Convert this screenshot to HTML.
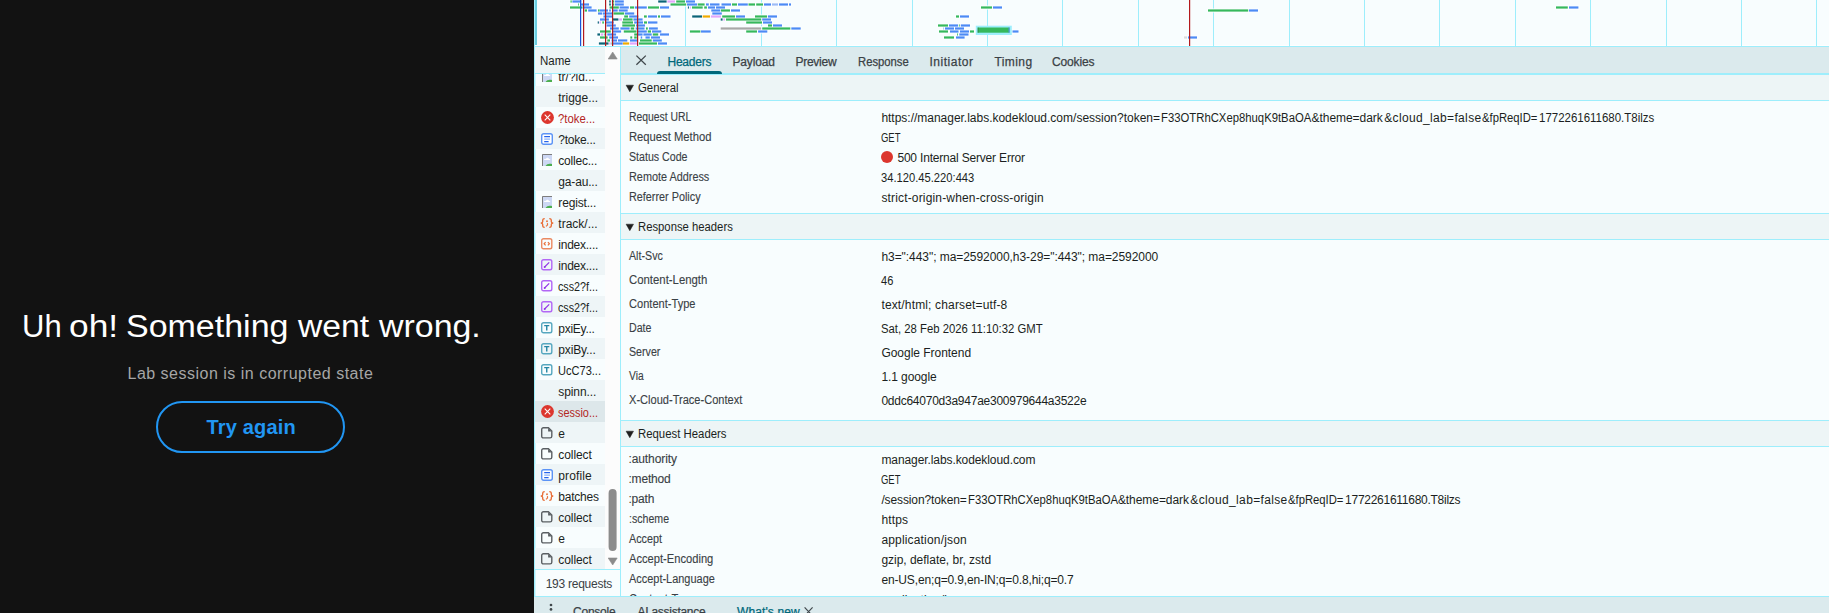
<!DOCTYPE html><html lang="en"><head><meta charset="utf-8"><title>Lab session error</title><style>
html,body{margin:0;padding:0;background:#121212;}
body{width:1829px;height:613px;position:relative;overflow:hidden;font-family:"Liberation Sans",sans-serif;}
.abs,.t,.ic{position:absolute;}
.t{white-space:pre;transform-origin:0 0;}
.tb{-webkit-text-stroke:0.25px currentColor;}
.lb{-webkit-text-stroke:0.12px currentColor;}
#page{left:0;top:0;width:534px;height:613px;background:#121212;}
h1,p{position:absolute;left:0;top:0;margin:0;font-weight:400;font-size:16px;}
#btn{position:absolute;left:156px;top:401px;width:189px;height:52px;box-sizing:border-box;border:2px solid #2196f3;border-radius:26px;background:transparent;padding:0;margin:0;font-family:inherit;}
#dt{left:534px;top:0;width:1295px;height:613px;background:#f8fdfe;overflow:hidden;}
.h{position:absolute;height:1px;background:#9eeefc;}
.v{position:absolute;width:1px;background:#9eeefc;}
.hdr{position:absolute;left:87px;width:1208px;height:25px;background:#edf5f6;}
.tri{position:absolute;left:91.9px;width:0;height:0;border-left:3.9px solid transparent;border-right:3.9px solid transparent;border-top:7px solid #1f1f1f;}
.row{position:absolute;left:1px;width:70px;height:21px;}
</style></head><body><div id="page" class="abs"><h1><span class="t hd" style="left:21.60px;top:307px;font-size:31px;line-height:39px;color:#ffffff;transform:translateY(-0.10px) scaleX(1.0004);">Uh</span> <span class="t hd" style="left:69.26px;top:307px;font-size:31px;line-height:39px;color:#ffffff;transform:translateY(-0.10px) scaleX(1.1398);">oh!</span> <span class="t hd" style="left:125.90px;top:307px;font-size:31px;line-height:39px;color:#ffffff;transform:translateY(-0.10px) scaleX(1.0962);">Something</span> <span class="t hd" style="left:298.09px;top:307px;font-size:31px;line-height:39px;color:#ffffff;transform:translateY(-0.10px) scaleX(1.0857);">went</span> <span class="t hd" style="left:379.09px;top:307px;font-size:31px;line-height:39px;color:#ffffff;transform:translateY(-0.10px) scaleX(1.0937);">wrong.</span></h1><p><span class="t" style="left:127.50px;top:364px;font-size:16px;line-height:20px;color:#a6a6a6;letter-spacing:0.495px;">Lab session is in corrupted state</span></p><button id="btn" type="button"><span class="t" style="left:48.50px;top:12px;font-size:20px;line-height:25px;color:#2196f3;letter-spacing:0.176px;font-weight:700;">Try again</span></button></div><div id="dt" class="abs"><div class="abs" style="left:0;top:0;width:1295px;height:46px;background:#f8fdfe"></div><svg class="abs" style="left:0;top:0" width="1295" height="47" viewBox="0 0 1295 47"><rect x="0" y="45" width="1295" height="1" fill="#ffffff"/><rect x="151" y="0" width="1" height="46" fill="#9eeefc"/><rect x="227" y="0" width="1" height="46" fill="#9eeefc"/><rect x="302" y="0" width="1" height="46" fill="#9eeefc"/><rect x="378" y="0" width="1" height="46" fill="#9eeefc"/><rect x="453" y="0" width="1" height="46" fill="#9eeefc"/><rect x="528" y="0" width="1" height="46" fill="#9eeefc"/><rect x="604" y="0" width="1" height="46" fill="#9eeefc"/><rect x="679" y="0" width="1" height="46" fill="#9eeefc"/><rect x="755" y="0" width="1" height="46" fill="#9eeefc"/><rect x="830" y="0" width="1" height="46" fill="#9eeefc"/><rect x="905" y="0" width="1" height="46" fill="#9eeefc"/><rect x="981" y="0" width="1" height="46" fill="#9eeefc"/><rect x="1056" y="0" width="1" height="46" fill="#9eeefc"/><rect x="1132" y="0" width="1" height="46" fill="#9eeefc"/><rect x="1207" y="0" width="1" height="46" fill="#9eeefc"/><rect x="1282" y="0" width="1" height="46" fill="#9eeefc"/><g fill="#fbfeff"><rect x="35.5" y="-0.5" width="3.2" height="4"/><rect x="37.4" y="-0.5" width="10.9" height="4"/><rect x="74.2" y="-0.5" width="3.6" height="4"/><rect x="76.8" y="-0.5" width="2.8" height="4"/><rect x="78.0" y="-0.5" width="3.2" height="4"/><rect x="80.0" y="-0.5" width="10.8" height="4"/><rect x="43.2" y="2.5" width="2.8" height="4"/><rect x="45.0" y="2.5" width="11.0" height="4"/><rect x="74.2" y="2.5" width="3.6" height="4"/><rect x="78.0" y="2.5" width="3.2" height="4"/><rect x="80.0" y="2.5" width="10.8" height="4"/><rect x="35.0" y="5.5" width="14.0" height="4"/><rect x="47.4" y="5.5" width="11.2" height="4"/><rect x="74.6" y="5.5" width="11.2" height="4"/><rect x="84.6" y="5.5" width="11.2" height="4"/><rect x="95.0" y="5.5" width="6.2" height="4"/><rect x="100.0" y="5.5" width="13.8" height="4"/><rect x="113.0" y="5.5" width="13.0" height="4"/><rect x="125.0" y="5.5" width="11.0" height="4"/><rect x="49.7" y="8.5" width="4.3" height="4"/><rect x="53.2" y="8.5" width="10.4" height="4"/><rect x="63.0" y="8.5" width="3.7" height="4"/><rect x="65.0" y="8.5" width="10.0" height="4"/><rect x="74.2" y="8.5" width="3.6" height="4"/><rect x="77.7" y="8.5" width="7.0" height="4"/><rect x="83.8" y="8.5" width="10.9" height="4"/><rect x="63.0" y="11.5" width="6.3" height="4"/><rect x="68.0" y="11.5" width="12.0" height="4"/><rect x="78.5" y="11.5" width="12.7" height="4"/><rect x="90.0" y="11.5" width="11.2" height="4"/><rect x="68.5" y="14.5" width="10.8" height="4"/><rect x="89.2" y="14.5" width="5.8" height="4"/><rect x="94.2" y="14.5" width="11.2" height="4"/><rect x="109.0" y="14.5" width="4.8" height="4"/><rect x="113.0" y="14.5" width="11.0" height="4"/><rect x="123.0" y="14.5" width="4.0" height="4"/><rect x="126.0" y="14.5" width="11.5" height="4"/><rect x="65.0" y="17.5" width="10.9" height="4"/><rect x="78.0" y="17.5" width="7.4" height="4"/><rect x="84.2" y="17.5" width="4.7" height="4"/><rect x="88.0" y="17.5" width="11.6" height="4"/><rect x="98.4" y="17.5" width="11.2" height="4"/><rect x="62.7" y="20.5" width="3.2" height="4"/><rect x="64.6" y="20.5" width="3.2" height="4"/><rect x="67.3" y="20.5" width="3.6" height="4"/><rect x="70.8" y="20.5" width="10.0" height="4"/><rect x="87.3" y="20.5" width="12.7" height="4"/><rect x="99.2" y="20.5" width="10.8" height="4"/><rect x="109.0" y="20.5" width="5.0" height="4"/><rect x="113.0" y="20.5" width="11.4" height="4"/><rect x="71.6" y="23.5" width="11.2" height="4"/><rect x="87.3" y="23.5" width="14.7" height="4"/><rect x="101.0" y="23.5" width="11.0" height="4"/><rect x="75.0" y="26.5" width="10.8" height="4"/><rect x="85.4" y="26.5" width="11.2" height="4"/><rect x="95.7" y="26.5" width="5.5" height="4"/><rect x="100.7" y="26.5" width="10.8" height="4"/><rect x="111.0" y="26.5" width="3.8" height="4"/><rect x="114.0" y="26.5" width="10.8" height="4"/><rect x="65.0" y="29.5" width="12.8" height="4"/><rect x="77.7" y="29.5" width="10.4" height="4"/><rect x="88.8" y="29.5" width="14.7" height="4"/><rect x="101.9" y="29.5" width="11.9" height="4"/><rect x="112.8" y="29.5" width="5.2" height="4"/><rect x="117.0" y="29.5" width="11.3" height="4"/><rect x="62.4" y="32.5" width="4.6" height="4"/><rect x="65.8" y="32.5" width="4.3" height="4"/><rect x="68.9" y="32.5" width="2.7" height="4"/><rect x="72.3" y="32.5" width="10.8" height="4"/><rect x="99.2" y="32.5" width="5.4" height="4"/><rect x="103.0" y="32.5" width="6.6" height="4"/><rect x="108.4" y="32.5" width="10.3" height="4"/><rect x="117.8" y="32.5" width="7.4" height="4"/><rect x="125.0" y="32.5" width="11.0" height="4"/><rect x="65.0" y="35.5" width="9.7" height="4"/><rect x="74.2" y="35.5" width="10.8" height="4"/><rect x="95.3" y="35.5" width="3.9" height="4"/><rect x="99.2" y="35.5" width="4.6" height="4"/><rect x="105.7" y="35.5" width="3.5" height="4"/><rect x="110.5" y="35.5" width="6.3" height="4"/><rect x="116.0" y="35.5" width="11.0" height="4"/><rect x="72.3" y="38.5" width="4.7" height="4"/><rect x="76.5" y="38.5" width="7.5" height="4"/><rect x="83.0" y="38.5" width="11.3" height="4"/><rect x="95.0" y="38.5" width="9.6" height="4"/><rect x="105.0" y="38.5" width="13.7" height="4"/><rect x="117.8" y="38.5" width="11.0" height="4"/><rect x="63.9" y="41.5" width="11.6" height="4"/><rect x="74.2" y="41.5" width="3.6" height="4"/><rect x="76.5" y="41.5" width="2.8" height="4"/><rect x="78.0" y="41.5" width="11.7" height="4"/><rect x="88.0" y="41.5" width="8.2" height="4"/><rect x="95.0" y="41.5" width="8.9" height="4"/><rect x="104.0" y="41.5" width="20.0" height="4"/><rect x="123.0" y="41.5" width="11.0" height="4"/><rect x="123.2" y="-0.5" width="10.4" height="4"/><rect x="132.4" y="-0.5" width="9.6" height="4"/><rect x="141.2" y="-0.5" width="10.8" height="4"/><rect x="151.0" y="-0.5" width="11.0" height="4"/><rect x="135.5" y="2.5" width="17.7" height="4"/><rect x="152.0" y="2.5" width="12.0" height="4"/><rect x="162.7" y="2.5" width="8.9" height="4"/><rect x="171.0" y="2.5" width="4.8" height="4"/><rect x="175.0" y="2.5" width="11.5" height="4"/><rect x="186.5" y="2.5" width="11.5" height="4"/><rect x="197.0" y="2.5" width="7.0" height="4"/><rect x="203.0" y="2.5" width="11.8" height="4"/><rect x="213.5" y="2.5" width="8.5" height="4"/><rect x="221.2" y="2.5" width="8.8" height="4"/><rect x="229.0" y="2.5" width="9.0" height="4"/><rect x="237.0" y="2.5" width="8.0" height="4"/><rect x="244.0" y="2.5" width="11.0" height="4"/><rect x="254.0" y="2.5" width="4.0" height="4"/><rect x="152.9" y="5.5" width="3.0" height="4"/><rect x="154.9" y="5.5" width="2.9" height="4"/><rect x="157.0" y="5.5" width="12.7" height="4"/><rect x="169.2" y="5.5" width="4.7" height="4"/><rect x="173.0" y="5.5" width="9.0" height="4"/><rect x="181.0" y="5.5" width="11.0" height="4"/><rect x="176.3" y="8.5" width="11.0" height="4"/><rect x="186.0" y="8.5" width="11.0" height="4"/><rect x="196.0" y="8.5" width="11.0" height="4"/><rect x="177.3" y="11.5" width="11.5" height="4"/><rect x="157.2" y="14.5" width="11.8" height="4"/><rect x="167.7" y="14.5" width="9.3" height="4"/><rect x="175.9" y="14.5" width="12.1" height="4"/><rect x="187.2" y="14.5" width="14.8" height="4"/><rect x="201.0" y="14.5" width="11.0" height="4"/><rect x="220.0" y="14.5" width="14.0" height="4"/><rect x="232.9" y="14.5" width="11.1" height="4"/><rect x="185.7" y="17.5" width="3.9" height="4"/><rect x="188.4" y="17.5" width="3.5" height="4"/><rect x="191.0" y="17.5" width="37.2" height="4"/><rect x="227.2" y="17.5" width="10.8" height="4"/><rect x="211.2" y="20.5" width="17.8" height="4"/><rect x="228.0" y="20.5" width="11.0" height="4"/><rect x="233.0" y="23.5" width="6.0" height="4"/><rect x="238.0" y="23.5" width="11.0" height="4"/><rect x="185.7" y="26.5" width="42.5" height="4"/><rect x="227.2" y="26.5" width="30.1" height="4"/><rect x="256.3" y="26.5" width="11.4" height="4"/><rect x="154.9" y="29.5" width="12.5" height="4"/><rect x="166.0" y="29.5" width="11.7" height="4"/><rect x="211.2" y="29.5" width="12.8" height="4"/><rect x="223.1" y="29.5" width="11.2" height="4"/><rect x="446.0" y="5.5" width="13.0" height="4"/><rect x="458.0" y="5.5" width="11.0" height="4"/><rect x="421.0" y="14.5" width="5.0" height="4"/><rect x="425.0" y="14.5" width="11.0" height="4"/><rect x="403.0" y="23.5" width="12.0" height="4"/><rect x="414.0" y="23.5" width="11.0" height="4"/><rect x="423.9" y="23.5" width="2.8" height="4"/><rect x="425.8" y="23.5" width="11.2" height="4"/><rect x="408.2" y="26.5" width="2.8" height="4"/><rect x="410.0" y="26.5" width="11.0" height="4"/><rect x="420.0" y="26.5" width="11.0" height="4"/><rect x="404.0" y="29.5" width="11.0" height="4"/><rect x="415.0" y="29.5" width="10.5" height="4"/><rect x="425.0" y="29.5" width="11.0" height="4"/><rect x="435.0" y="29.5" width="6.0" height="4"/><rect x="477.5" y="29.5" width="8.0" height="4"/><rect x="422.0" y="32.5" width="2.8" height="4"/><rect x="424.3" y="32.5" width="11.2" height="4"/><rect x="409.0" y="35.5" width="12.0" height="4"/><rect x="421.0" y="35.5" width="10.6" height="4"/><rect x="673.0" y="8.5" width="42.2" height="4"/><rect x="714.0" y="8.5" width="11.0" height="4"/><rect x="649.0" y="35.5" width="5.0" height="4"/><rect x="653.0" y="35.5" width="11.0" height="4"/><rect x="1021.0" y="5.5" width="13.8" height="4"/><rect x="1034.0" y="5.5" width="11.4" height="4"/></g><rect x="36.5" y="0.4" width="1.2" height="2.2" fill="#36b85c"/><rect x="38.4" y="0.4" width="8.9" height="2.2" fill="#4c8af5"/><rect x="75.2" y="0.4" width="1.6" height="2.2" fill="#0b6478"/><rect x="77.8" y="0.4" width="0.8" height="2.2" fill="#e2a6fa"/><rect x="79.0" y="0.4" width="1.2" height="2.2" fill="#36b85c"/><rect x="81.0" y="0.4" width="8.8" height="2.2" fill="#4c8af5"/><rect x="44.2" y="3.4" width="0.8" height="2.2" fill="#36b85c"/><rect x="46.0" y="3.4" width="9.0" height="2.2" fill="#4c8af5"/><rect x="75.2" y="3.4" width="1.6" height="2.2" fill="#0b6478"/><rect x="79.0" y="3.4" width="1.2" height="2.2" fill="#36b85c"/><rect x="81.0" y="3.4" width="8.8" height="2.2" fill="#4c8af5"/><rect x="36.0" y="6.4" width="12.0" height="2.2" fill="#36b85c"/><rect x="48.4" y="6.4" width="9.2" height="2.2" fill="#4c8af5"/><rect x="75.6" y="6.4" width="9.2" height="2.2" fill="#36b85c"/><rect x="85.6" y="6.4" width="9.2" height="2.2" fill="#4c8af5"/><rect x="96.0" y="6.4" width="4.2" height="2.2" fill="#36b85c"/><rect x="101.0" y="6.4" width="11.8" height="2.2" fill="#4c8af5"/><rect x="114.0" y="6.4" width="11.0" height="2.2" fill="#36b85c"/><rect x="126.0" y="6.4" width="9.0" height="2.2" fill="#4c8af5"/><rect x="50.7" y="9.4" width="2.3" height="2.2" fill="#36b85c"/><rect x="54.2" y="9.4" width="8.4" height="2.2" fill="#4c8af5"/><rect x="64.0" y="9.4" width="1.7" height="2.2" fill="#36b85c"/><rect x="66.0" y="9.4" width="8.0" height="2.2" fill="#4c8af5"/><rect x="75.2" y="9.4" width="1.6" height="2.2" fill="#4c8af5"/><rect x="78.7" y="9.4" width="5.0" height="2.2" fill="#4c8af5"/><rect x="84.8" y="9.4" width="8.9" height="2.2" fill="#4c8af5"/><rect x="64.0" y="12.4" width="4.3" height="2.2" fill="#4c8af5"/><rect x="69.0" y="12.4" width="10.0" height="2.2" fill="#4c8af5"/><rect x="79.5" y="12.4" width="10.7" height="2.2" fill="#36b85c"/><rect x="91.0" y="12.4" width="9.2" height="2.2" fill="#4c8af5"/><rect x="69.5" y="15.4" width="8.8" height="2.2" fill="#4c8af5"/><rect x="90.2" y="15.4" width="3.8" height="2.2" fill="#36b85c"/><rect x="95.2" y="15.4" width="9.2" height="2.2" fill="#4c8af5"/><rect x="110.0" y="15.4" width="2.8" height="2.2" fill="#36b85c"/><rect x="114.0" y="15.4" width="9.0" height="2.2" fill="#4c8af5"/><rect x="124.0" y="15.4" width="2.0" height="2.2" fill="#36b85c"/><rect x="127.0" y="15.4" width="9.5" height="2.2" fill="#4c8af5"/><rect x="66.0" y="18.4" width="8.9" height="2.2" fill="#4c8af5"/><rect x="79.0" y="18.4" width="5.4" height="2.2" fill="#0b6478"/><rect x="85.2" y="18.4" width="2.7" height="2.2" fill="#e2a6fa"/><rect x="89.0" y="18.4" width="9.6" height="2.2" fill="#36b85c"/><rect x="99.4" y="18.4" width="9.2" height="2.2" fill="#4c8af5"/><rect x="63.7" y="21.4" width="1.2" height="2.2" fill="#0b6478"/><rect x="65.6" y="21.4" width="1.2" height="2.2" fill="#e2a6fa"/><rect x="68.3" y="21.4" width="1.6" height="2.2" fill="#36b85c"/><rect x="71.8" y="21.4" width="8.0" height="2.2" fill="#4c8af5"/><rect x="88.3" y="21.4" width="10.7" height="2.2" fill="#36b85c"/><rect x="100.2" y="21.4" width="8.8" height="2.2" fill="#4c8af5"/><rect x="110.0" y="21.4" width="3.0" height="2.2" fill="#36b85c"/><rect x="114.0" y="21.4" width="9.4" height="2.2" fill="#4c8af5"/><rect x="72.6" y="24.4" width="9.2" height="2.2" fill="#4c8af5"/><rect x="88.3" y="24.4" width="12.7" height="2.2" fill="#36b85c"/><rect x="102.0" y="24.4" width="9.0" height="2.2" fill="#4c8af5"/><rect x="76.0" y="27.4" width="8.8" height="2.2" fill="#4c8af5"/><rect x="86.4" y="27.4" width="9.2" height="2.2" fill="#4c8af5"/><rect x="96.7" y="27.4" width="3.5" height="2.2" fill="#36b85c"/><rect x="101.7" y="27.4" width="8.8" height="2.2" fill="#4c8af5"/><rect x="112.0" y="27.4" width="1.8" height="2.2" fill="#36b85c"/><rect x="115.0" y="27.4" width="8.8" height="2.2" fill="#4c8af5"/><rect x="66.0" y="30.4" width="10.8" height="2.2" fill="#36b85c"/><rect x="78.7" y="30.4" width="8.4" height="2.2" fill="#4c8af5"/><rect x="89.8" y="30.4" width="12.7" height="2.2" fill="#36b85c"/><rect x="102.9" y="30.4" width="9.9" height="2.2" fill="#4c8af5"/><rect x="113.8" y="30.4" width="3.2" height="2.2" fill="#36b85c"/><rect x="118.0" y="30.4" width="9.3" height="2.2" fill="#4c8af5"/><rect x="63.4" y="33.4" width="2.6" height="2.2" fill="#0b6478"/><rect x="66.8" y="33.4" width="2.3" height="2.2" fill="#e2a6fa"/><rect x="69.9" y="33.4" width="0.7" height="2.2" fill="#36b85c"/><rect x="73.3" y="33.4" width="8.8" height="2.2" fill="#4c8af5"/><rect x="100.2" y="33.4" width="3.4" height="2.2" fill="#36b85c"/><rect x="104.0" y="33.4" width="4.6" height="2.2" fill="#4c8af5"/><rect x="109.4" y="33.4" width="8.3" height="2.2" fill="#4c8af5"/><rect x="118.8" y="33.4" width="5.4" height="2.2" fill="#36b85c"/><rect x="126.0" y="33.4" width="9.0" height="2.2" fill="#4c8af5"/><rect x="66.0" y="36.4" width="7.7" height="2.2" fill="#36b85c"/><rect x="75.2" y="36.4" width="8.8" height="2.2" fill="#4c8af5"/><rect x="96.3" y="36.4" width="1.9" height="2.2" fill="#36b85c"/><rect x="100.2" y="36.4" width="2.6" height="2.2" fill="#36b85c"/><rect x="106.7" y="36.4" width="1.5" height="2.2" fill="#4c8af5"/><rect x="111.5" y="36.4" width="4.3" height="2.2" fill="#4c8af5"/><rect x="117.0" y="36.4" width="9.0" height="2.2" fill="#4c8af5"/><rect x="73.3" y="39.4" width="2.7" height="2.2" fill="#36b85c"/><rect x="77.5" y="39.4" width="5.5" height="2.2" fill="#4c8af5"/><rect x="84.0" y="39.4" width="9.3" height="2.2" fill="#4c8af5"/><rect x="96.0" y="39.4" width="7.6" height="2.2" fill="#4c8af5"/><rect x="106.0" y="39.4" width="11.7" height="2.2" fill="#36b85c"/><rect x="118.8" y="39.4" width="9.0" height="2.2" fill="#4c8af5"/><rect x="64.9" y="42.4" width="9.6" height="2.2" fill="#0b6478"/><rect x="75.2" y="42.4" width="1.6" height="2.2" fill="#e2a6fa"/><rect x="77.5" y="42.4" width="0.8" height="2.2" fill="#36b85c"/><rect x="79.0" y="42.4" width="9.7" height="2.2" fill="#4c8af5"/><rect x="89.0" y="42.4" width="6.2" height="2.2" fill="#f0ab00"/><rect x="96.0" y="42.4" width="6.9" height="2.2" fill="#e2a6fa"/><rect x="105.0" y="42.4" width="18.0" height="2.2" fill="#36b85c"/><rect x="124.0" y="42.4" width="9.0" height="2.2" fill="#4c8af5"/><rect x="124.2" y="0.4" width="8.4" height="2.2" fill="#0b6478"/><rect x="133.4" y="0.4" width="7.6" height="2.2" fill="#e2a6fa"/><rect x="142.2" y="0.4" width="8.8" height="2.2" fill="#36b85c"/><rect x="152.0" y="0.4" width="9.0" height="2.2" fill="#4c8af5"/><rect x="136.5" y="3.4" width="15.7" height="2.2" fill="#36b85c"/><rect x="153.0" y="3.4" width="10.0" height="2.2" fill="#4c8af5"/><rect x="163.7" y="3.4" width="6.9" height="2.2" fill="#36b85c"/><rect x="172.0" y="3.4" width="2.8" height="2.2" fill="#4c8af5"/><rect x="176.0" y="3.4" width="9.5" height="2.2" fill="#4c8af5"/><rect x="187.5" y="3.4" width="9.5" height="2.2" fill="#4c8af5"/><rect x="198.0" y="3.4" width="5.0" height="2.2" fill="#36b85c"/><rect x="204.0" y="3.4" width="9.8" height="2.2" fill="#4c8af5"/><rect x="214.5" y="3.4" width="6.5" height="2.2" fill="#36b85c"/><rect x="222.2" y="3.4" width="6.8" height="2.2" fill="#36b85c"/><rect x="230.0" y="3.4" width="7.0" height="2.2" fill="#4c8af5"/><rect x="238.0" y="3.4" width="6.0" height="2.2" fill="#9dbcf7"/><rect x="245.0" y="3.4" width="9.0" height="2.2" fill="#4c8af5"/><rect x="255.0" y="3.4" width="2.0" height="2.2" fill="#4c8af5"/><rect x="153.9" y="6.4" width="1.0" height="2.2" fill="#0b6478"/><rect x="155.9" y="6.4" width="0.9" height="2.2" fill="#e2a6fa"/><rect x="158.0" y="6.4" width="10.7" height="2.2" fill="#36b85c"/><rect x="170.2" y="6.4" width="2.7" height="2.2" fill="#36b85c"/><rect x="174.0" y="6.4" width="7.0" height="2.2" fill="#4c8af5"/><rect x="182.0" y="6.4" width="9.0" height="2.2" fill="#4c8af5"/><rect x="177.3" y="9.4" width="9.0" height="2.2" fill="#4c8af5"/><rect x="187.0" y="9.4" width="9.0" height="2.2" fill="#36b85c"/><rect x="197.0" y="9.4" width="9.0" height="2.2" fill="#4c8af5"/><rect x="178.3" y="12.4" width="9.5" height="2.2" fill="#4c8af5"/><rect x="158.2" y="15.4" width="9.8" height="2.2" fill="#0b6478"/><rect x="168.7" y="15.4" width="7.3" height="2.2" fill="#f0ab00"/><rect x="176.9" y="15.4" width="10.1" height="2.2" fill="#e2a6fa"/><rect x="188.2" y="15.4" width="12.8" height="2.2" fill="#36b85c"/><rect x="202.0" y="15.4" width="9.0" height="2.2" fill="#4c8af5"/><rect x="221.0" y="15.4" width="12.0" height="2.2" fill="#36b85c"/><rect x="233.9" y="15.4" width="9.1" height="2.2" fill="#4c8af5"/><rect x="186.7" y="18.4" width="1.9" height="2.2" fill="#0b6478"/><rect x="189.4" y="18.4" width="1.5" height="2.2" fill="#e2a6fa"/><rect x="192.0" y="18.4" width="35.2" height="2.2" fill="#36b85c"/><rect x="228.2" y="18.4" width="8.8" height="2.2" fill="#4c8af5"/><rect x="212.2" y="21.4" width="15.8" height="2.2" fill="#36b85c"/><rect x="229.0" y="21.4" width="9.0" height="2.2" fill="#4c8af5"/><rect x="234.0" y="24.4" width="4.0" height="2.2" fill="#36b85c"/><rect x="239.0" y="24.4" width="9.0" height="2.2" fill="#4c8af5"/><rect x="186.7" y="27.4" width="40.5" height="2.2" fill="#a8a8a8"/><rect x="228.2" y="27.4" width="28.1" height="2.2" fill="#36b85c"/><rect x="257.3" y="27.4" width="9.4" height="2.2" fill="#4c8af5"/><rect x="155.9" y="30.4" width="10.5" height="2.2" fill="#36b85c"/><rect x="167.0" y="30.4" width="9.7" height="2.2" fill="#4c8af5"/><rect x="212.2" y="30.4" width="10.8" height="2.2" fill="#36b85c"/><rect x="224.1" y="30.4" width="9.2" height="2.2" fill="#4c8af5"/><rect x="447.0" y="6.4" width="11.0" height="2.2" fill="#36b85c"/><rect x="459.0" y="6.4" width="9.0" height="2.2" fill="#4c8af5"/><rect x="422.0" y="15.4" width="3.0" height="2.2" fill="#36b85c"/><rect x="426.0" y="15.4" width="9.0" height="2.2" fill="#4c8af5"/><rect x="404.0" y="24.4" width="10.0" height="2.2" fill="#36b85c"/><rect x="415.0" y="24.4" width="9.0" height="2.2" fill="#4c8af5"/><rect x="424.9" y="24.4" width="0.8" height="2.2" fill="#36b85c"/><rect x="426.8" y="24.4" width="9.2" height="2.2" fill="#4c8af5"/><rect x="409.2" y="27.4" width="0.8" height="2.2" fill="#9dbcf7"/><rect x="411.0" y="27.4" width="9.0" height="2.2" fill="#4c8af5"/><rect x="421.0" y="27.4" width="9.0" height="2.2" fill="#4c8af5"/><rect x="405.0" y="30.4" width="9.0" height="2.2" fill="#36b85c"/><rect x="416.0" y="30.4" width="8.5" height="2.2" fill="#4c8af5"/><rect x="426.0" y="30.4" width="9.0" height="2.2" fill="#4c8af5"/><rect x="436.0" y="30.4" width="4.0" height="2.2" fill="#36b85c"/><rect x="478.5" y="30.4" width="6.0" height="2.2" fill="#4c8af5"/><rect x="423.0" y="33.4" width="0.8" height="2.2" fill="#36b85c"/><rect x="425.3" y="33.4" width="9.2" height="2.2" fill="#4c8af5"/><rect x="410.0" y="36.4" width="10.0" height="2.2" fill="#36b85c"/><rect x="422.0" y="36.4" width="8.6" height="2.2" fill="#4c8af5"/><rect x="674.0" y="9.4" width="40.2" height="2.2" fill="#36b85c"/><rect x="715.0" y="9.4" width="9.0" height="2.2" fill="#4c8af5"/><rect x="650.0" y="36.4" width="3.0" height="2.2" fill="#d9dddd"/><rect x="654.0" y="36.4" width="9.0" height="2.2" fill="#4c8af5"/><rect x="1022.0" y="6.4" width="11.8" height="2.2" fill="#36b85c"/><rect x="1035.0" y="6.4" width="9.4" height="2.2" fill="#4c8af5"/><rect x="441.8" y="25.7" width="36" height="9.3" fill="#9eeefc"/><rect x="443.7" y="27.5" width="31.8" height="5.2" fill="#36b85c"/><rect x="474.6" y="27.5" width="1" height="5.2" fill="#4c8af5"/><rect x="443.7" y="27.5" width="0.8" height="5.2" fill="#2f7d4a"/><rect x="49" y="0" width="1.2" height="46" fill="#b3191c"/><rect x="71" y="0" width="1.2" height="46" fill="#b3191c"/><rect x="78" y="0" width="1.2" height="46" fill="#b3191c"/><rect x="103" y="0" width="1.2" height="46" fill="#b3191c"/><rect x="655" y="0" width="1.2" height="46" fill="#b3191c"/><rect x="46" y="0" width="1.2" height="46" fill="#1a53d6"/><rect x="0" y="46" width="1295" height="1" fill="#9eeefc"/><rect x="0" y="0" width="1" height="46" fill="#9eeefc"/><rect x="1" y="0" width="2" height="45" fill="#6ccde0"/></svg><div class="v" style="left:0;top:46px;height:551px"></div><div class="v" style="left:1px;top:47px;height:549px;background:#d4f6fd"></div><div class="abs" style="left:1px;top:47px;width:70px;height:26px;background:#edf5f6"></div><div id="list" class="abs" style="left:0;top:74px;width:71px;height:495px;overflow:hidden"><svg class="ic" style="left:8px;top:-4.2px" width="10" height="12" viewBox="0 0 10 12"><rect x="0" y="0" width="10" height="12" fill="#cdd8f4"/><path d="M0.5 12V0.5H10" fill="none" stroke="#7d7d7d" stroke-width="1"/><path d="M2 6.1c-.1-1.1 1.100-1.600 1.900-1.200.5-1.500 2.700-1.500 3.100 0 1-.1 1.500.6 1.200 1.200z" fill="#fff"/><path d="M3.600 12c1.200-2.300 4-2.900 6.400-1.900V12z" fill="#4caf50"/></svg><div class="row" style="top:12px;background:#eef5f7"></div><svg class="ic" style="left:6.5px;top:37.2px" width="13" height="13" viewBox="0 0 13 13"><circle cx="6.5" cy="6.5" r="6.4" fill="#dc362e"/><path d="M3.700 3.700l5.600 5.600M9.300 3.700l-5.600 5.600" stroke="#fff" stroke-width="1.050"/></svg><div class="row" style="top:54px;background:#eef5f7"></div><svg class="ic" style="left:6.8px;top:58.8px" width="12" height="12" viewBox="0 0 12 12"><rect x="0.7" y="0.7" width="10.6" height="10.6" rx="2" fill="#fff" stroke="#5b93f6" stroke-width="1.4"/><path d="M3.2 3.6h5.8M3.2 8.6h4.4" stroke="#2563eb" stroke-width="1.1"/><path d="M3.2 6.1h5.8" stroke="#7ba7f7" stroke-width="1.1"/></svg><svg class="ic" style="left:8px;top:79.8px" width="10" height="12" viewBox="0 0 10 12"><rect x="0" y="0" width="10" height="12" fill="#cdd8f4"/><path d="M0.5 12V0.5H10" fill="none" stroke="#7d7d7d" stroke-width="1"/><path d="M2 6.1c-.1-1.1 1.100-1.600 1.900-1.200.5-1.500 2.700-1.500 3.100 0 1-.1 1.500.6 1.200 1.200z" fill="#fff"/><path d="M3.600 12c1.200-2.300 4-2.900 6.400-1.900V12z" fill="#4caf50"/></svg><div class="row" style="top:96px;background:#eef5f7"></div><svg class="ic" style="left:8px;top:121.8px" width="10" height="12" viewBox="0 0 10 12"><rect x="0" y="0" width="10" height="12" fill="#cdd8f4"/><path d="M0.5 12V0.5H10" fill="none" stroke="#7d7d7d" stroke-width="1"/><path d="M2 6.1c-.1-1.1 1.100-1.600 1.900-1.200.5-1.500 2.700-1.500 3.100 0 1-.1 1.500.6 1.200 1.200z" fill="#fff"/><path d="M3.600 12c1.200-2.300 4-2.900 6.400-1.900V12z" fill="#4caf50"/></svg><div class="row" style="top:138px;background:#eef5f7"></div><svg class="ic" style="left:6px;top:143.6px" width="14" height="10" viewBox="0 0 14 10"><path d="M4.700 0.650C3.100 0.650 2.700 1.300 2.700 2.300v1.100c0 1-.6 1.500-1.900 1.600 1.300.1 1.900.6 1.900 1.600v1.100c0 1 .4 1.650 2 1.650M9.300 0.650c1.600 0 2 .65 2 1.650v1.100c0 1 .6 1.500 1.900 1.600-1.300.1-1.900.6-1.900 1.600v1.100c0 1-.4 1.650-2 1.650" fill="none" stroke="#e8703a" stroke-width="1.4"/><circle cx="7" cy="3.300" r="0.950" fill="#e8703a"/><path d="M7.500 5.700c.3 1-.1 1.800-1.100 2.300" stroke="#e8703a" stroke-width="1.300" fill="none" stroke-linecap="round"/></svg><svg class="ic" style="left:7.1px;top:164.2px" width="11.5" height="11.5" viewBox="0 0 11.5 11.5"><rect x="0.7" y="0.7" width="10.1" height="10.1" rx="1.8" fill="none" stroke="#ea8a62" stroke-width="1.4"/><path d="M4.6 4.1L3.1 5.75 4.6 7.4M6.9 4.1L8.4 5.75 6.9 7.4" fill="none" stroke="#e8703a" stroke-width="1.2"/></svg><div class="row" style="top:180px;background:#eef5f7"></div><svg class="ic" style="left:7.1px;top:185.2px" width="11.5" height="11.5" viewBox="0 0 11.5 11.5"><rect x="0.7" y="0.7" width="10.1" height="10.1" rx="1.8" fill="none" stroke="#b267f5" stroke-width="1.4"/><path d="M3.6 8L8.2 3.4" stroke="#9334e6" stroke-width="1.2"/><circle cx="3.7" cy="7.9" r="1" fill="#9334e6"/></svg><svg class="ic" style="left:7.1px;top:206.2px" width="11.5" height="11.5" viewBox="0 0 11.5 11.5"><rect x="0.7" y="0.7" width="10.1" height="10.1" rx="1.8" fill="none" stroke="#b267f5" stroke-width="1.4"/><path d="M3.6 8L8.2 3.4" stroke="#9334e6" stroke-width="1.2"/><circle cx="3.7" cy="7.9" r="1" fill="#9334e6"/></svg><div class="row" style="top:222px;background:#eef5f7"></div><svg class="ic" style="left:7.1px;top:227.2px" width="11.5" height="11.5" viewBox="0 0 11.5 11.5"><rect x="0.7" y="0.7" width="10.1" height="10.1" rx="1.8" fill="none" stroke="#b267f5" stroke-width="1.4"/><path d="M3.6 8L8.2 3.4" stroke="#9334e6" stroke-width="1.2"/><circle cx="3.7" cy="7.9" r="1" fill="#9334e6"/></svg><svg class="ic" style="left:7.1px;top:248.2px" width="11.5" height="11.5" viewBox="0 0 11.5 11.5"><rect x="0.7" y="0.7" width="10.1" height="10.1" rx="1.8" fill="none" stroke="#56a7bf" stroke-width="1.4"/><path d="M3.2 3.6h5.1M5.75 3.6v4.8" stroke="#2586a4" stroke-width="1.4" fill="none"/></svg><div class="row" style="top:264px;background:#eef5f7"></div><svg class="ic" style="left:7.1px;top:269.2px" width="11.5" height="11.5" viewBox="0 0 11.5 11.5"><rect x="0.7" y="0.7" width="10.1" height="10.1" rx="1.8" fill="none" stroke="#56a7bf" stroke-width="1.4"/><path d="M3.2 3.6h5.1M5.75 3.6v4.8" stroke="#2586a4" stroke-width="1.4" fill="none"/></svg><svg class="ic" style="left:7.1px;top:290.2px" width="11.5" height="11.5" viewBox="0 0 11.5 11.5"><rect x="0.7" y="0.7" width="10.1" height="10.1" rx="1.8" fill="none" stroke="#56a7bf" stroke-width="1.4"/><path d="M3.2 3.6h5.1M5.75 3.6v4.8" stroke="#2586a4" stroke-width="1.4" fill="none"/></svg><div class="row" style="top:306px;background:#eef5f7"></div><div class="row" style="top:327px;background:#dde7ea"></div><svg class="ic" style="left:6.5px;top:331.2px" width="13" height="13" viewBox="0 0 13 13"><circle cx="6.5" cy="6.5" r="6.4" fill="#dc362e"/><path d="M3.700 3.700l5.600 5.600M9.300 3.700l-5.600 5.600" stroke="#fff" stroke-width="1.050"/></svg><div class="row" style="top:348px;background:#eef5f7"></div><svg class="ic" style="left:7.3px;top:353.4px" width="11.5" height="11.5" viewBox="0 0 11.5 11.5"><path d="M2.4 0.7H7.4L10.8 4.1V9.2a1.7 1.7 0 0 1-1.7 1.7H2.4A1.7 1.7 0 0 1 .7 9.2V2.4A1.7 1.7 0 0 1 2.4.7z" fill="none" stroke="#5a5f63" stroke-width="1.4"/><path d="M7.1 0.9V4.4H10.6z" fill="#5a5f63"/></svg><svg class="ic" style="left:7.3px;top:374.4px" width="11.5" height="11.5" viewBox="0 0 11.5 11.5"><path d="M2.4 0.7H7.4L10.8 4.1V9.2a1.7 1.7 0 0 1-1.7 1.7H2.4A1.7 1.7 0 0 1 .7 9.2V2.4A1.7 1.7 0 0 1 2.4.7z" fill="none" stroke="#5a5f63" stroke-width="1.4"/><path d="M7.1 0.9V4.4H10.6z" fill="#5a5f63"/></svg><div class="row" style="top:390px;background:#eef5f7"></div><svg class="ic" style="left:6.8px;top:394.8px" width="12" height="12" viewBox="0 0 12 12"><rect x="0.7" y="0.7" width="10.6" height="10.6" rx="2" fill="#fff" stroke="#5b93f6" stroke-width="1.4"/><path d="M3.2 3.6h5.8M3.2 8.6h4.4" stroke="#2563eb" stroke-width="1.1"/><path d="M3.2 6.1h5.8" stroke="#7ba7f7" stroke-width="1.1"/></svg><svg class="ic" style="left:6px;top:416.6px" width="14" height="10" viewBox="0 0 14 10"><path d="M4.700 0.650C3.100 0.650 2.700 1.300 2.700 2.300v1.100c0 1-.6 1.500-1.900 1.600 1.300.1 1.900.6 1.900 1.600v1.100c0 1 .4 1.650 2 1.650M9.300 0.650c1.600 0 2 .65 2 1.650v1.100c0 1 .6 1.500 1.900 1.600-1.300.1-1.900.6-1.900 1.600v1.100c0 1-.4 1.650-2 1.650" fill="none" stroke="#e8703a" stroke-width="1.4"/><circle cx="7" cy="3.300" r="0.950" fill="#e8703a"/><path d="M7.500 5.700c.3 1-.1 1.800-1.100 2.300" stroke="#e8703a" stroke-width="1.300" fill="none" stroke-linecap="round"/></svg><div class="row" style="top:432px;background:#eef5f7"></div><svg class="ic" style="left:7.3px;top:437.4px" width="11.5" height="11.5" viewBox="0 0 11.5 11.5"><path d="M2.4 0.7H7.4L10.8 4.1V9.2a1.7 1.7 0 0 1-1.7 1.7H2.4A1.7 1.7 0 0 1 .7 9.2V2.4A1.7 1.7 0 0 1 2.4.7z" fill="none" stroke="#5a5f63" stroke-width="1.4"/><path d="M7.1 0.9V4.4H10.6z" fill="#5a5f63"/></svg><svg class="ic" style="left:7.3px;top:458.4px" width="11.5" height="11.5" viewBox="0 0 11.5 11.5"><path d="M2.4 0.7H7.4L10.8 4.1V9.2a1.7 1.7 0 0 1-1.7 1.7H2.4A1.7 1.7 0 0 1 .7 9.2V2.4A1.7 1.7 0 0 1 2.4.7z" fill="none" stroke="#5a5f63" stroke-width="1.4"/><path d="M7.1 0.9V4.4H10.6z" fill="#5a5f63"/></svg><div class="row" style="top:474px;background:#eef5f7"></div><svg class="ic" style="left:7.3px;top:479.4px" width="11.5" height="11.5" viewBox="0 0 11.5 11.5"><path d="M2.4 0.7H7.4L10.8 4.1V9.2a1.7 1.7 0 0 1-1.7 1.7H2.4A1.7 1.7 0 0 1 .7 9.2V2.4A1.7 1.7 0 0 1 2.4.7z" fill="none" stroke="#5a5f63" stroke-width="1.4"/><path d="M7.1 0.9V4.4H10.6z" fill="#5a5f63"/></svg><span class="t rowtxt" style="left:24.30px;top:-4px;font-size:12px;line-height:15px;color:#1b1f21;letter-spacing:-0.018px;">tr/?id...</span><span class="t rowtxt" style="left:24.30px;top:17px;font-size:12px;line-height:15px;color:#1b1f21;letter-spacing:-0.023px;">trigge...</span><span class="t rowtxt" style="left:24.30px;top:38px;font-size:12px;line-height:15px;color:#b3261e;transform:translateY(0.00px) scaleX(0.9456);">?toke...</span><span class="t rowtxt" style="left:24.30px;top:59px;font-size:12px;line-height:15px;color:#1b1f21;letter-spacing:-0.260px;">?toke...</span><span class="t rowtxt" style="left:24.30px;top:80px;font-size:12px;line-height:15px;color:#1b1f21;letter-spacing:-0.206px;">collec...</span><span class="t rowtxt" style="left:24.30px;top:101px;font-size:12px;line-height:15px;color:#1b1f21;letter-spacing:-0.166px;">ga-au...</span><span class="t rowtxt" style="left:24.30px;top:122px;font-size:12px;line-height:15px;color:#1b1f21;letter-spacing:-0.164px;">regist...</span><span class="t rowtxt" style="left:24.30px;top:143px;font-size:12px;line-height:15px;color:#1b1f21;">track/...</span><span class="t rowtxt" style="left:24.30px;top:164px;font-size:12px;line-height:15px;color:#1b1f21;letter-spacing:-0.249px;">index....</span><span class="t rowtxt" style="left:24.30px;top:185px;font-size:12px;line-height:15px;color:#1b1f21;letter-spacing:-0.249px;">index....</span><span class="t rowtxt" style="left:24.30px;top:206px;font-size:12px;line-height:15px;color:#1b1f21;transform:translateY(0.00px) scaleX(0.8952);">css2?f...</span><span class="t rowtxt" style="left:24.30px;top:227px;font-size:12px;line-height:15px;color:#1b1f21;transform:translateY(0.00px) scaleX(0.8952);">css2?f...</span><span class="t rowtxt" style="left:24.30px;top:248px;font-size:12px;line-height:15px;color:#1b1f21;letter-spacing:-0.274px;">pxiEy...</span><span class="t rowtxt" style="left:24.30px;top:269px;font-size:12px;line-height:15px;color:#1b1f21;letter-spacing:-0.132px;">pxiBy...</span><span class="t rowtxt" style="left:24.30px;top:290px;font-size:12px;line-height:15px;color:#1b1f21;transform:translateY(0.00px) scaleX(0.9213);">UcC73...</span><span class="t rowtxt" style="left:24.30px;top:311px;font-size:12px;line-height:15px;color:#1b1f21;letter-spacing:-0.094px;">spinn...</span><span class="t rowtxt" style="left:24.30px;top:332px;font-size:12px;line-height:15px;color:#b3261e;transform:translateY(0.00px) scaleX(0.9088);">sessio...</span><span class="t rowtxt" style="left:24.30px;top:353px;font-size:12px;line-height:15px;color:#1b1f21;">e</span><span class="t rowtxt" style="left:24.30px;top:374px;font-size:12px;line-height:15px;color:#1b1f21;letter-spacing:-0.080px;">collect</span><span class="t rowtxt" style="left:24.30px;top:395px;font-size:12px;line-height:15px;color:#1b1f21;letter-spacing:0.115px;">profile</span><span class="t rowtxt" style="left:24.30px;top:416px;font-size:12px;line-height:15px;color:#1b1f21;letter-spacing:-0.222px;">batches</span><span class="t rowtxt" style="left:24.30px;top:437px;font-size:12px;line-height:15px;color:#1b1f21;letter-spacing:-0.080px;">collect</span><span class="t rowtxt" style="left:24.30px;top:458px;font-size:12px;line-height:15px;color:#1b1f21;">e</span><span class="t rowtxt" style="left:24.30px;top:479px;font-size:12px;line-height:15px;color:#1b1f21;letter-spacing:-0.080px;">collect</span></div><div class="h" style="left:1px;top:73px;width:70px"></div><div class="abs" style="left:71px;top:47px;width:15px;height:522px;background:#fcfcfc"></div><svg class="abs" style="left:71px;top:47px" width="15" height="522" viewBox="0 0 15 522"><path d="M3.2 12L7.7 5 12.2 12z" fill="#8b8b8b" stroke="#8b8b8b" stroke-width="0.6" stroke-linejoin="round"/><rect x="3.6" y="442" width="8" height="62" rx="4" fill="#8b8b8b"/><path d="M3.2 511L7.7 518 12.2 511z" fill="#8b8b8b" stroke="#8b8b8b" stroke-width="0.6" stroke-linejoin="round"/></svg><div class="h" style="left:0;top:569px;width:86px"></div><div class="v" style="left:86px;top:47px;height:549px"></div><div class="abs" style="left:87px;top:47px;width:1208px;height:26px;background:#dbeaed"></div><div class="h" style="left:87px;top:73px;width:1208px;height:2px"></div><div class="abs" style="left:123px;top:71px;width:65px;height:3px;background:#00687a;border-radius:3px 3px 0 0"></div><svg class="abs" style="left:101px;top:54px" width="12" height="12" viewBox="0 0 12 12"><path d="M1.4 1.6l9.4 9.2M10.8 1.6l-9.4 9.2" stroke="#40484c" stroke-width="1.3"/></svg><div class="hdr" style="top:75px"></div><svg class="abs" style="left:91px;top:84px" width="10" height="9" viewBox="0 0 10 9"><path d="M1.100 1.200H8.500L4.800 7.700z" fill="#1f1f1f" stroke="#1f1f1f" stroke-width="0.5" stroke-linejoin="round"/></svg><div class="hdr" style="top:214px"></div><svg class="abs" style="left:91px;top:223px" width="10" height="9" viewBox="0 0 10 9"><path d="M1.100 1.200H8.500L4.800 7.700z" fill="#1f1f1f" stroke="#1f1f1f" stroke-width="0.5" stroke-linejoin="round"/></svg><div class="hdr" style="top:421px"></div><svg class="abs" style="left:91px;top:430px" width="10" height="9" viewBox="0 0 10 9"><path d="M1.100 1.200H8.500L4.800 7.700z" fill="#1f1f1f" stroke="#1f1f1f" stroke-width="0.5" stroke-linejoin="round"/></svg><div class="h" style="left:87px;top:100px;width:1208px"></div><div class="h" style="left:87px;top:213px;width:1208px"></div><div class="h" style="left:87px;top:239px;width:1208px"></div><div class="h" style="left:87px;top:420px;width:1208px"></div><div class="h" style="left:87px;top:446px;width:1208px"></div><div class="abs" style="left:347px;top:151.4px;width:12px;height:12px;border-radius:50%;background:#dc362e"></div><div class="abs" style="left:0;top:597px;width:1295px;height:16px;background:#dbeaed"></div><div class="h" style="left:0;top:596px;width:1295px"></div><svg class="abs" style="left:15px;top:603px" width="4" height="10" viewBox="0 0 4 10"><circle cx="2" cy="2" r="1.35" fill="#40484c"/><circle cx="2" cy="6.4" r="1.35" fill="#40484c"/></svg><svg class="abs" style="left:269.5px;top:607px" width="9" height="6" viewBox="0 0 9 6"><path d="M0.6 0.4l4 4.2 4-4.2M4.6 4.6l-1.5 1.6M4.6 4.6l1.5 1.6" fill="none" stroke="#40484c" stroke-width="1.2"/></svg></div><div id="txt" class="abs" style="left:0;top:0;width:1829px;height:613px;overflow:hidden"><div class="abs" style="left:621px;top:447px;width:1208px;height:149px;overflow:hidden"><span class="t lb" style="left:7.40px;top:5px;font-size:12px;line-height:15px;color:#3a4145;letter-spacing:-0.073px;">:authority</span><span class="t" style="left:260.40px;top:6px;font-size:12px;line-height:15px;color:#1b1f21;letter-spacing:-0.084px;">manager.labs.kodekloud.com</span><span class="t lb" style="left:7.40px;top:25px;font-size:12px;line-height:15px;color:#3a4145;letter-spacing:-0.164px;">:method</span><span class="t" style="left:260.40px;top:26px;font-size:12px;line-height:15px;color:#1b1f21;transform:translateY(-0.40px) scaleX(0.7893);">GET</span><span class="t lb" style="left:7.40px;top:45px;font-size:12px;line-height:15px;color:#3a4145;letter-spacing:-0.154px;">:path</span><span class="t" style="left:260.40px;top:46px;font-size:12px;line-height:15px;color:#1b1f21;letter-spacing:-0.118px;">/session?token=</span><span class="t" style="left:346.90px;top:46px;font-size:12px;line-height:15px;color:#1b1f21;transform:translateY(-0.40px) scaleX(0.9416);">F33OTRhCXep8huqK9tBaOA</span><span class="t" style="left:496.90px;top:46px;font-size:12px;line-height:15px;color:#1b1f21;letter-spacing:-0.061px;">&amp;theme=dark</span><span class="t" style="left:569.30px;top:46px;font-size:12px;line-height:15px;color:#1b1f21;letter-spacing:0.349px;">&amp;cloud_lab=false</span><span class="t" style="left:667.10px;top:46px;font-size:12px;line-height:15px;color:#1b1f21;transform:translateY(-0.40px) scaleX(0.9386);">&amp;fpReqID=</span><span class="t" style="left:724.10px;top:46px;font-size:12px;line-height:15px;color:#1b1f21;letter-spacing:-0.270px;">1772261611680.T8ilzs</span><span class="t lb" style="left:7.52px;top:65px;font-size:12px;line-height:15px;color:#3a4145;transform:translateY(-0.40px) scaleX(0.8841);">:scheme</span><span class="t" style="left:260.40px;top:66px;font-size:12px;line-height:15px;color:#1b1f21;letter-spacing:0.146px;">https</span><span class="t lb" style="left:8.40px;top:85px;font-size:12px;line-height:15px;color:#3a4145;transform:translateY(-0.40px) scaleX(0.8996);">Accept</span><span class="t" style="left:260.40px;top:86px;font-size:12px;line-height:15px;color:#1b1f21;letter-spacing:0.170px;">application/json</span><span class="t lb" style="left:8.40px;top:105px;font-size:12px;line-height:15px;color:#3a4145;transform:translateY(-0.40px) scaleX(0.9295);">Accept-Encoding</span><span class="t" style="left:260.40px;top:106px;font-size:12px;line-height:15px;color:#1b1f21;letter-spacing:-0.018px;">gzip, deflate, br, zstd</span><span class="t lb" style="left:8.40px;top:125px;font-size:12px;line-height:15px;color:#3a4145;transform:translateY(-0.40px) scaleX(0.9121);">Accept-Language</span><span class="t" style="left:260.40px;top:126px;font-size:12px;line-height:15px;color:#1b1f21;letter-spacing:-0.143px;">en-US,en;q=0.9,en-IN;q=0.8,hi;q=0.7</span><span class="t lb" style="left:8.40px;top:145px;font-size:12px;line-height:15px;color:#3a4145;transform:translateY(-0.40px) scaleX(0.9231);">Content-Type</span><span class="t" style="left:260.40px;top:146px;font-size:12px;line-height:15px;color:#1b1f21;letter-spacing:0.170px;">application/json</span></div><span class="t" style="left:540.30px;top:54px;font-size:12px;line-height:15px;color:#1b1f21;transform:translateY(0.00px) scaleX(0.9556);">Name</span><span class="t" style="left:545.70px;top:577px;font-size:12px;line-height:15px;color:#3a4145;letter-spacing:-0.253px;">193 requests</span><span class="t tb" style="left:667.50px;top:55px;font-size:12px;line-height:15px;color:#00687a;letter-spacing:-0.243px;">Headers</span><span class="t tb" style="left:732.50px;top:55px;font-size:12px;line-height:15px;color:#3a4145;letter-spacing:-0.165px;">Payload</span><span class="t tb" style="left:795.40px;top:55px;font-size:12px;line-height:15px;color:#3a4145;letter-spacing:-0.236px;">Preview</span><span class="t tb" style="left:858.40px;top:55px;font-size:12px;line-height:15px;color:#3a4145;transform:translateY(0.00px) scaleX(0.9382);">Response</span><span class="t tb" style="left:929.40px;top:55px;font-size:12px;line-height:15px;color:#3a4145;letter-spacing:0.531px;">Initiator</span><span class="t tb" style="left:994.40px;top:55px;font-size:12px;line-height:15px;color:#3a4145;letter-spacing:0.423px;">Timing</span><span class="t tb" style="left:1052.00px;top:55px;font-size:12px;line-height:15px;color:#3a4145;letter-spacing:-0.159px;">Cookies</span><span class="t" style="left:638.20px;top:81px;font-size:12px;line-height:15px;color:#1b1f21;transform:translateY(0.00px) scaleX(0.9494);">General</span><span class="t" style="left:638.20px;top:220px;font-size:12px;line-height:15px;color:#1b1f21;transform:translateY(0.00px) scaleX(0.9411);">Response headers</span><span class="t" style="left:638.30px;top:427px;font-size:12px;line-height:15px;color:#1b1f21;transform:translateY(0.00px) scaleX(0.9477);">Request Headers</span><span class="t" style="left:881.40px;top:111px;font-size:12px;line-height:15px;color:#1b1f21;letter-spacing:-0.016px;">https://manager.labs.kodekloud.com</span><span class="t" style="left:1073.10px;top:111px;font-size:12px;line-height:15px;color:#1b1f21;letter-spacing:-0.011px;">/session?token=</span><span class="t" style="left:1161.30px;top:111px;font-size:12px;line-height:15px;color:#1b1f21;transform:translateY(-0.20px) scaleX(0.9428);">F33OTRhCXep8huqK9tBaOA</span><span class="t" style="left:1311.50px;top:111px;font-size:12px;line-height:15px;color:#1b1f21;letter-spacing:-0.041px;">&amp;theme=dark</span><span class="t" style="left:1384.20px;top:111px;font-size:12px;line-height:15px;color:#1b1f21;letter-spacing:0.349px;">&amp;cloud_lab=false</span><span class="t" style="left:1481.90px;top:111px;font-size:12px;line-height:15px;color:#1b1f21;transform:translateY(-0.20px) scaleX(0.9386);">&amp;fpReqID=</span><span class="t" style="left:1538.90px;top:111px;font-size:12px;line-height:15px;color:#1b1f21;transform:translateY(-0.20px) scaleX(0.9557);">1772261611680.T8ilzs</span><span class="t lb" style="left:629.40px;top:110px;font-size:12px;line-height:15px;color:#3a4145;transform:translateY(-0.20px) scaleX(0.8651);">Request URL</span><span class="t lb" style="left:629.40px;top:130px;font-size:12px;line-height:15px;color:#3a4145;transform:translateY(-0.20px) scaleX(0.9361);">Request Method</span><span class="t" style="left:881.40px;top:131px;font-size:12px;line-height:15px;color:#1b1f21;transform:translateY(-0.20px) scaleX(0.7893);">GET</span><span class="t lb" style="left:629.40px;top:150px;font-size:12px;line-height:15px;color:#3a4145;transform:translateY(-0.20px) scaleX(0.8860);">Status Code</span><span class="t lb" style="left:629.40px;top:170px;font-size:12px;line-height:15px;color:#3a4145;transform:translateY(-0.20px) scaleX(0.9052);">Remote Address</span><span class="t" style="left:881.40px;top:171px;font-size:12px;line-height:15px;color:#1b1f21;transform:translateY(-0.20px) scaleX(0.9321);">34.120.45.220:443</span><span class="t lb" style="left:629.40px;top:190px;font-size:12px;line-height:15px;color:#3a4145;transform:translateY(-0.20px) scaleX(0.9023);">Referrer Policy</span><span class="t" style="left:881.40px;top:191px;font-size:12px;line-height:15px;color:#1b1f21;letter-spacing:0.163px;">strict-origin-when-cross-origin</span><span class="t" style="left:897.40px;top:151px;font-size:12px;line-height:15px;color:#1b1f21;letter-spacing:-0.186px;">500 Internal Server Error</span><span class="t lb" style="left:629.40px;top:249px;font-size:12px;line-height:15px;color:#3a4145;transform:translateY(-0.10px) scaleX(0.8894);">Alt-Svc</span><span class="t" style="left:881.40px;top:250px;font-size:12px;line-height:15px;color:#1b1f21;letter-spacing:-0.053px;">h3=":443"; ma=2592000,h3-29=":443"; ma=2592000</span><span class="t lb" style="left:629.40px;top:273px;font-size:12px;line-height:15px;color:#3a4145;transform:translateY(-0.10px) scaleX(0.9469);">Content-Length</span><span class="t" style="left:881.40px;top:274px;font-size:12px;line-height:15px;color:#1b1f21;transform:translateY(-0.10px) scaleX(0.9215);">46</span><span class="t lb" style="left:629.40px;top:297px;font-size:12px;line-height:15px;color:#3a4145;transform:translateY(-0.10px) scaleX(0.9231);">Content-Type</span><span class="t" style="left:881.40px;top:298px;font-size:12px;line-height:15px;color:#1b1f21;letter-spacing:0.152px;">text/html; charset=utf-8</span><span class="t lb" style="left:629.40px;top:321px;font-size:12px;line-height:15px;color:#3a4145;transform:translateY(-0.10px) scaleX(0.8881);">Date</span><span class="t" style="left:881.40px;top:322px;font-size:12px;line-height:15px;color:#1b1f21;transform:translateY(-0.10px) scaleX(0.9436);">Sat, 28 Feb 2026 11:10:32 GMT</span><span class="t lb" style="left:629.40px;top:345px;font-size:12px;line-height:15px;color:#3a4145;transform:translateY(-0.10px) scaleX(0.8883);">Server</span><span class="t" style="left:881.40px;top:346px;font-size:12px;line-height:15px;color:#1b1f21;letter-spacing:-0.027px;">Google Frontend</span><span class="t lb" style="left:629.40px;top:369px;font-size:12px;line-height:15px;color:#3a4145;transform:translateY(-0.10px) scaleX(0.8537);">Via</span><span class="t" style="left:881.40px;top:370px;font-size:12px;line-height:15px;color:#1b1f21;letter-spacing:-0.086px;">1.1 google</span><span class="t lb" style="left:629.40px;top:393px;font-size:12px;line-height:15px;color:#3a4145;transform:translateY(-0.10px) scaleX(0.9216);">X-Cloud-Trace-Context</span><span class="t" style="left:881.40px;top:394px;font-size:12px;line-height:15px;color:#1b1f21;letter-spacing:-0.246px;">0ddc64070d3a947ae300979644a3522e</span><span class="t tb" style="left:573.00px;top:605px;font-size:12px;line-height:15px;color:#3a4145;letter-spacing:-0.226px;">Console</span><span class="t tb" style="left:637.60px;top:605px;font-size:12px;line-height:15px;color:#3a4145;letter-spacing:-0.274px;">AI assistance</span><span class="t tb" style="left:737.00px;top:605px;font-size:12px;line-height:15px;color:#00687a;letter-spacing:0.113px;">What's new</span></div></body></html>
